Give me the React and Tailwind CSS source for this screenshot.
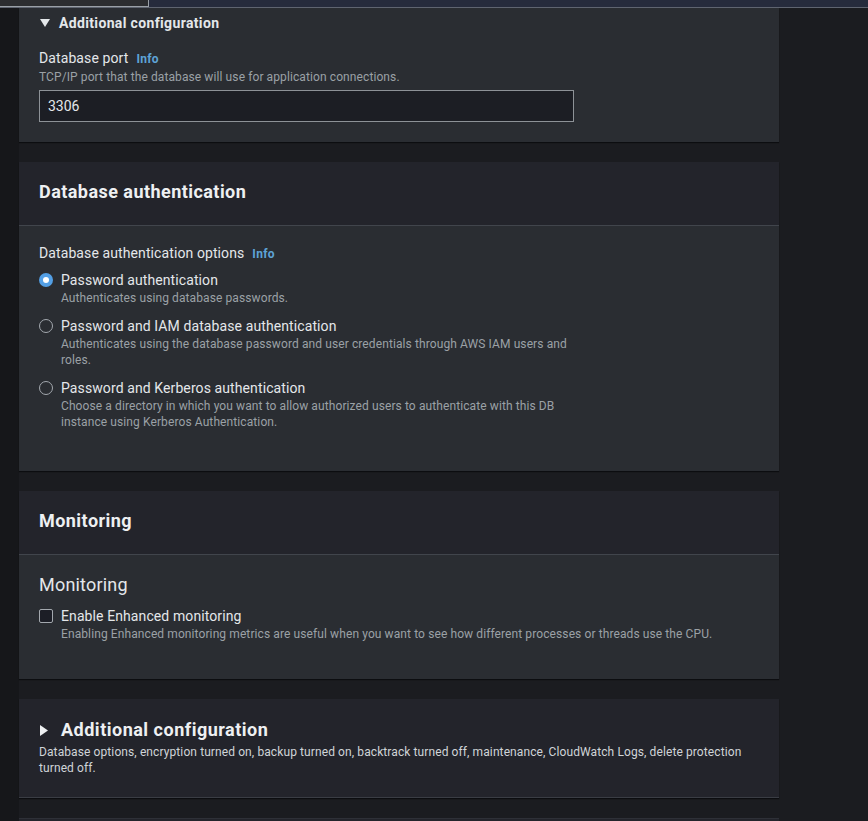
import React from 'react';

const font = { fontFamily: 'Roboto, "Noto Sans", sans-serif' };

function Info() {
  return <span className="ml-2 text-[12px] font-bold text-[#5ea3d6] tracking-[0.3px]">Info</span>;
}

function Caret({ open }) {
  return open ? (
    <svg width="10" height="9" viewBox="0 0 10 9" className="shrink-0">
      <path d="M0 0h10L5 8z" fill="#e4e7ea" />
    </svg>
  ) : (
    <svg width="9" height="11" viewBox="0 0 9 11" className="shrink-0">
      <path d="M0 0v11l8-5.5z" fill="#eef0f2" />
    </svg>
  );
}

function Radio({ checked, label, desc }) {
  return (
    <div className="flex gap-2">
      <div className="pt-[3px]">
        {checked ? (
          <div className="w-[14px] h-[14px] rounded-full bg-[#539fe5] flex items-center justify-center">
            <div className="w-[6px] h-[6px] rounded-full bg-white" />
          </div>
        ) : (
          <div className="w-[14px] h-[14px] rounded-full border border-[#a3a8ae]" />
        )}
      </div>
      <div>
        <div className="text-[14px] leading-[20px] text-[#e4e7ea] tracking-[0.1px]">{label}</div>
        <div className="text-[12px] leading-[16px] text-[#9ba1a6] max-w-[515px] tracking-[0.1px]">{desc}</div>
      </div>
    </div>
  );
}

function Panel({ children, className = '' }) {
  return (
    <div className={`w-[760px] bg-[#2a2d32] shadow-[0_1px_1px_#0c0d10] ${className}`}>{children}</div>
  );
}

function PanelHeader({ title }) {
  return (
    <div className="h-16 px-5 pb-[3px] flex items-center bg-[#23242b] border-b border-[#41454c]">
      <h2 className="text-[18px] leading-[24px] font-bold text-[#eef0f2] tracking-[0.45px]">{title}</h2>
    </div>
  );
}

export default function App() {
  return (
    <div className="min-h-screen bg-[#1b1c20] flex flex-col" style={font}>
      {/* Top strip */}
      <div className="h-2 flex border-b border-[#5f6470] bg-[#262b3c]">
        <div className="w-[149px] h-full bg-[#2c2d30] border-r border-b border-[#9aa0a6]" />
      </div>

      <div className="flex flex-1">
        <div className="w-[19px] bg-[#16171a]" />
        <div className="flex flex-col gap-5">
          {/* Additional configuration (expanded) */}
          <Panel className="px-5 pt-[5px] pb-5">
            <div className="flex items-center gap-[9px] text-[14px] leading-[20px] font-bold text-[#e4e7ea] tracking-[0.35px]">
              <span className="pl-px"><Caret open /></span>
              Additional configuration
            </div>
            <div className="mt-[15px] text-[14px] leading-[20px] text-[#e4e7ea] tracking-[0.1px]">
              Database port
              <Info />
            </div>
            <div className="text-[12px] leading-[16px] text-[#9ba1a6] tracking-[0.1px]">
              TCP/IP port that the database will use for application connections.
            </div>
            <div className="mt-[5px] w-[535px] h-8 border border-[#8d9297] bg-[#1c1e24] px-2 flex items-center text-[14px] text-[#e4e7ea]">
              3306
            </div>
          </Panel>

          {/* Database authentication */}
          <Panel>
            <PanelHeader title="Database authentication" />
            <div className="px-5 pt-[17px] pb-[41px]">
              <div className="text-[14px] leading-[20px] text-[#e4e7ea] tracking-[0.1px]">
                Database authentication options
                <Info />
              </div>
              <div className="mt-[6px] flex flex-col gap-[10px]">
                <Radio checked label="Password authentication" desc="Authenticates using database passwords." />
                <Radio
                  label="Password and IAM database authentication"
                  desc="Authenticates using the database password and user credentials through AWS IAM users and roles."
                />
                <Radio
                  label="Password and Kerberos authentication"
                  desc="Choose a directory in which you want to allow authorized users to authenticate with this DB instance using Kerberos Authentication."
                />
              </div>
            </div>
          </Panel>

          {/* Monitoring */}
          <Panel>
            <PanelHeader title="Monitoring" />
            <div className="px-5 pt-[18px] pb-[37px]">
              <div className="text-[18px] leading-[24px] text-[#e4e7ea] tracking-[0.2px]">Monitoring</div>
              <div className="mt-[9px] flex gap-2">
                <div className="pt-[3px]">
                  <div className="w-[14px] h-[14px] rounded-[2px] border border-[#a3a8ae] bg-[#1c1e26]" />
                </div>
                <div>
                  <div className="text-[14px] leading-[20px] text-[#e4e7ea] tracking-[0.1px]">Enable Enhanced monitoring</div>
                  <div className="text-[12px] leading-[16px] text-[#9ba1a6] tracking-[0.1px]">
                    Enabling Enhanced monitoring metrics are useful when you want to see how different processes or threads use the CPU.
                  </div>
                </div>
              </div>
            </div>
          </Panel>

          {/* Additional configuration (collapsed) */}
          <div className="w-[760px] bg-[#23242b] px-5 pt-[19px] pb-[21px] shadow-[0_1px_1px_#0c0d10] border-b border-[#3a3d44]">
            <div className="flex items-center gap-3 text-[18px] leading-[24px] font-bold text-[#eef0f2] tracking-[0.5px]">
              <span className="pl-px"><Caret /></span>
              Additional configuration
            </div>
            <div className="mt-[2px] text-[12px] leading-[16px] text-[#d0d4d8] tracking-[0.1px]">
              Database options, encryption turned on, backup turned on, backtrack turned off, maintenance, CloudWatch Logs, delete protection turned off.
            </div>
          </div>

          <div className="w-[760px] h-[40px] bg-[#23242b] border-t border-[#2e3037]" />
        </div>
      </div>
    </div>
  );
}
